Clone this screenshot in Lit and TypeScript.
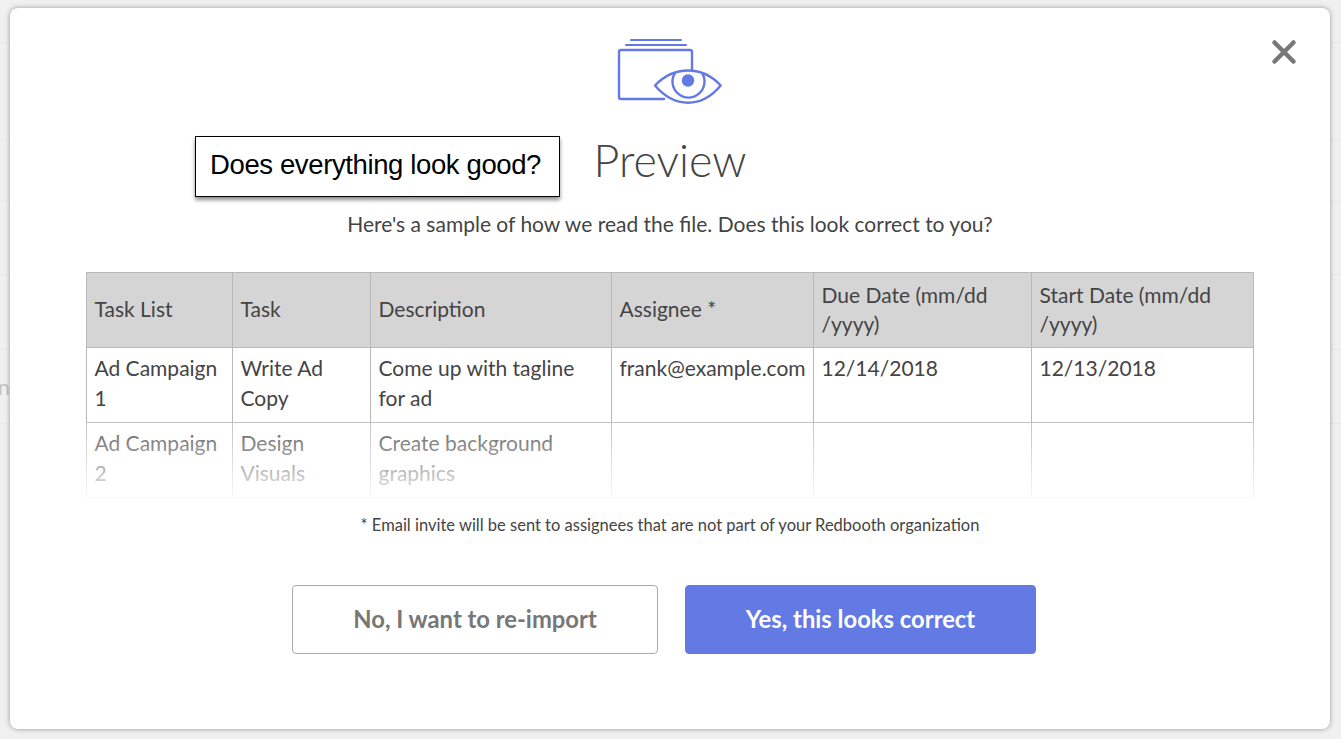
import { LitElement, html, css } from "lit";
import { customElement } from "lit/decorators.js";

const ROWS = [43, 97, 62, 73, 75, 74];

@customElement("app-root")
export class AppRoot extends LitElement {
  static styles = css`
    :host { display: block; width: 1341px; height: 739px; position: relative; overflow: hidden; background: #f0f0f0; font-family: Lato, "Liberation Sans", sans-serif; color: #444; }
    .backdrop { display: flex; flex-direction: column; }
    .bg-row { border-bottom: 1px solid #e8e8e8; box-sizing: border-box; }
    .ghost { position: absolute; left: -6px; top: 372px; width: 16px; font-size: 22px; line-height: 30px; color: #c4c4c4; text-align: right; overflow: hidden; }
    .modal { position: absolute; left: 10px; top: 8px; width: 1320px; height: 721px; box-sizing: border-box; background: #fff; border-radius: 8px; box-shadow: 0 0 5px rgba(0,0,0,.38); display: flex; flex-direction: column; align-items: center; padding-top: 30px; }
    .icon { display: block; width: 106px; height: 68px; }
    .close { position: absolute; left: 1261px; top: 31px; width: 26px; height: 26px; }
    .title { margin: 25px 0 0; font-size: 44.8px; line-height: 58px; font-weight: 300; color: #444; height: 58px; }
    .sub { margin: 21px 0 0; font-size: 21px; line-height: 28px; color: #444; }
    .table-wrap { position: relative; margin-top: 34px; width: 1168px; height: 226px; overflow: hidden; }
    table { border-collapse: collapse; table-layout: fixed; width: 1168px; font-size: 21px; line-height: 29.5px; color: #444; }
    td, th { border: 1px solid #b9b9b9; padding: 5px 8px 9px 7.5px; text-align: left; vertical-align: top; font-weight: 400; box-sizing: border-box; height: 75px; }
    th { background: #d5d5d5; vertical-align: middle; padding: 4px 8px 6px 7.5px; }
    .fade { position: absolute; left: 0; right: 0; top: 150px; height: 76px; background: linear-gradient(to bottom, rgba(255,255,255,.13), rgba(255,255,255,.91)); }
    .note { margin: 15px 0 0; font-size: 16.5px; line-height: 24px; color: #444; }
    .actions { display: flex; gap: 27px; margin: 48px 12px 0 0; }
    .btn { box-sizing: border-box; height: 69px; border-radius: 4px; font: 700 23.8px/1 Lato, sans-serif; display: flex; align-items: center; justify-content: center; }
    .no { width: 366px; background: #fff; border: 1px solid #aaa; color: #777; }
    .yes { width: 351px; background: #6379e4; border: 1px solid #6379e4; color: #fff; }
    .callout { position: absolute; left: 195px; top: 136px; width: 365px; height: 61px; box-sizing: border-box; background: #fff; border: 1px solid #000; box-shadow: 0 3px 4px rgba(0,0,0,.45); font-family: "Liberation Sans", sans-serif; font-size: 27.5px; letter-spacing: -0.38px; color: #000; display: flex; align-items: center; padding: 0 0 4px 14px; }
  `;

  render() {
    const head = ["Task List", "Task", "Description", "Assignee *", "Due Date (mm/dd /yyyy)", "Start Date (mm/dd /yyyy)"];
    const r1 = ["Ad Campaign 1", "Write Ad Copy", "Come up with tagline for ad", "frank@example.com", "12/14/2018", "12/13/2018"];
    const r2 = ["Ad Campaign 2", "Design Visuals", "Create background graphics", "", "", ""];
    const widths = [146, 138, 241, 202, 218, 222];
    return html`
      <div class="backdrop">${ROWS.map((h) => html`<div class="bg-row" style="height:${h}px"></div>`)}</div>
      <div class="ghost">n</div>
      <div class="modal">
        <svg class="icon" viewBox="617 38 106 68" fill="none" stroke="#6379e4" stroke-width="2.4" stroke-linecap="round" stroke-linejoin="round">
          <path d="M631 40h50" stroke-width="2"/>
          <path d="M626 45h60" stroke-width="2"/>
          <path d="M692 71V52a2 2 0 0 0-2-2h-69a2 2 0 0 0-2 2v45a2 2 0 0 0 2 2h43"/>
          <path d="M655 85.500C664 76 675 70.500 688 70.500S712 76 720.700 85.500C712 96 700 102.700 688 102.700S664 96 655 85.500z"/>
          <path d="M675 73A16 16 0 1 0 702 73"/>
          <circle cx="688" cy="80.500" r="6.200" fill="#6379e4" stroke="none"/>
        </svg>
        <svg class="close" viewBox="0 0 26 26" stroke="#777" stroke-width="4.500" stroke-linecap="round"><path d="M3.500 3.500l19 19M22.500 3.500l-19 19"/></svg>
        <h1 class="title">Preview</h1>
        <p class="sub">Here's a sample of how we read the file. Does this look correct to you?</p>
        <div class="table-wrap">
          <table>
            <colgroup>${widths.map((w) => html`<col style="width:${w}px" />`)}</colgroup>
            <tr>${head.map((c) => html`<th>${c}</th>`)}</tr>
            <tr>${r1.map((c) => html`<td>${c}</td>`)}</tr>
            <tr>${r2.map((c) => html`<td>${c}</td>`)}</tr>
          </table>
          <div class="fade"></div>
        </div>
        <p class="note">* Email invite will be sent to assignees that are not part of your Redbooth organization</p>
        <div class="actions">
          <div class="btn no">No, I want to re-import</div>
          <div class="btn yes">Yes, this looks correct</div>
        </div>
      </div>
      <div class="callout">Does everything look good?</div>
    `;
  }
}
